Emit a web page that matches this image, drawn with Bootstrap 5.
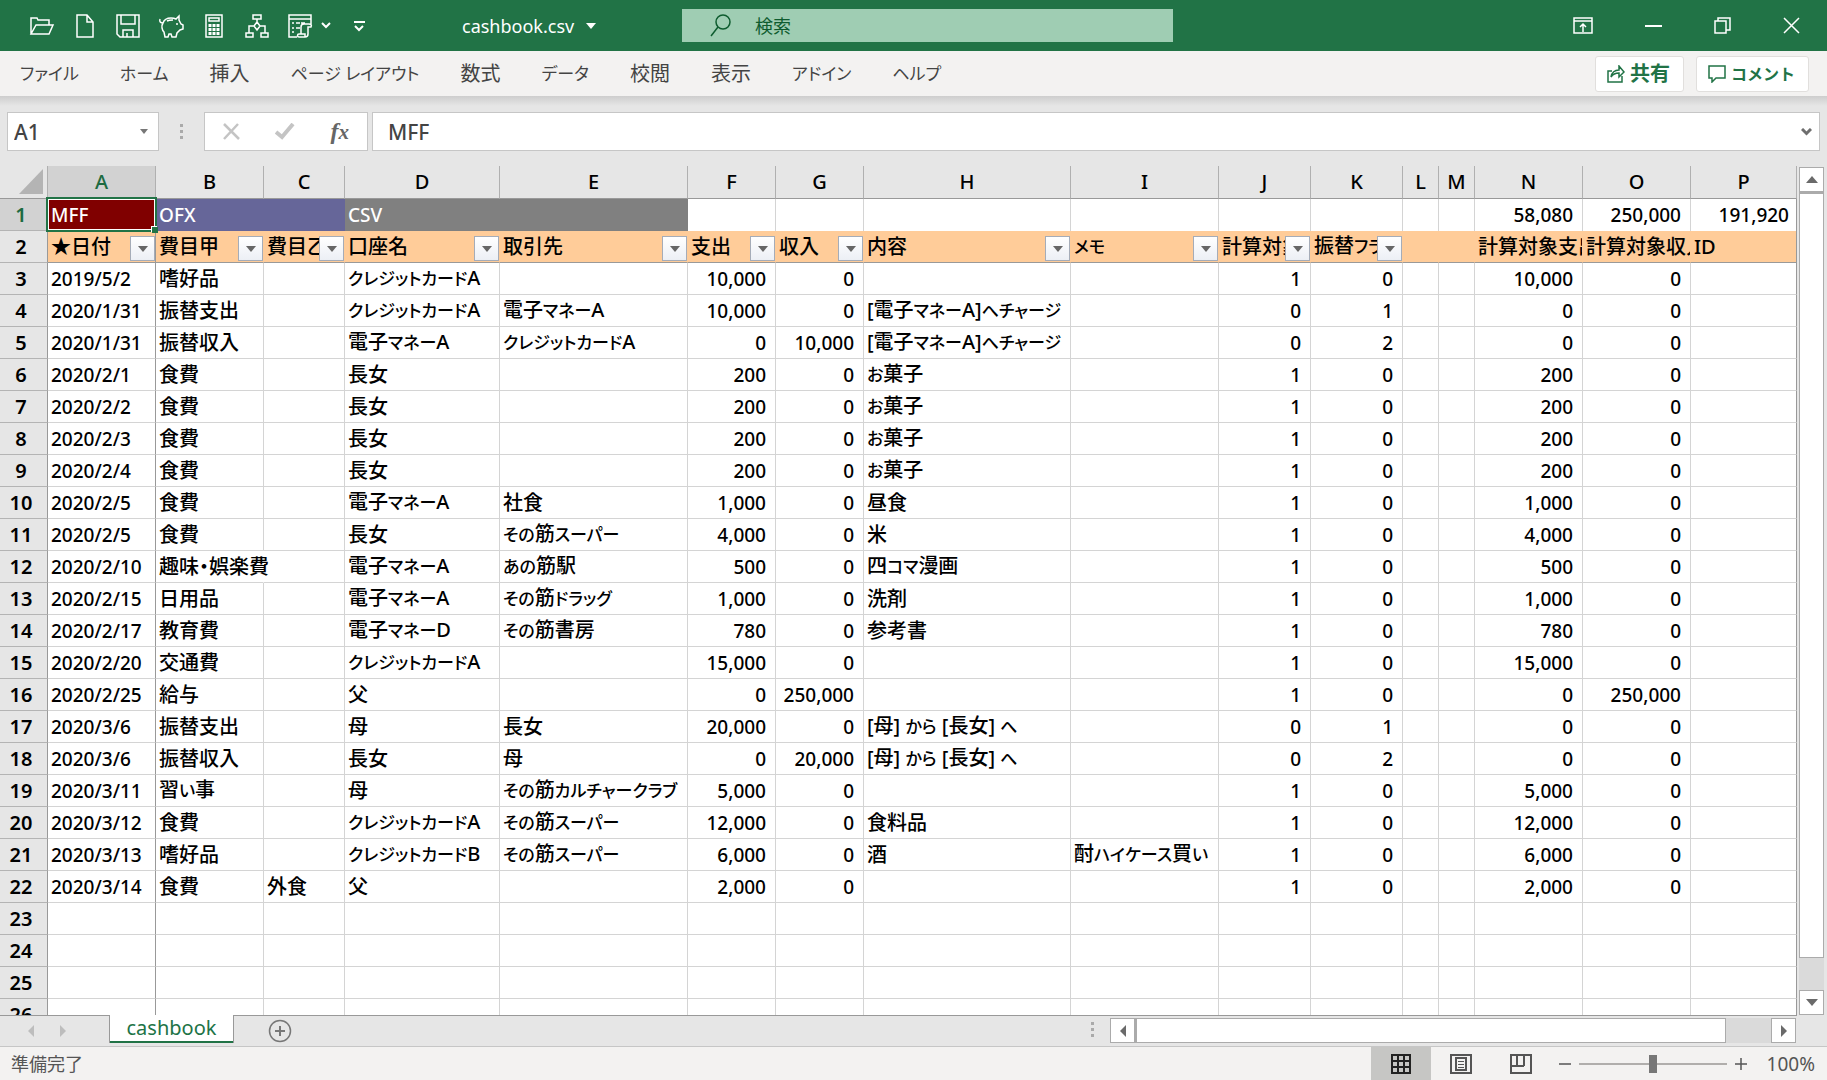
<!DOCTYPE html>
<html lang="ja">
<head>
<meta charset="utf-8">
<meta name="viewport" content="width=device-width, initial-scale=1">
<title>cashbook.csv</title>
<link href="https://cdn.jsdelivr.net/npm/bootstrap@5.3.0/dist/css/bootstrap.min.css" rel="stylesheet">
<style>
:root { --xl-green: #217346; --xl-line: #d4d4d4; --xl-dark: #999; --xl-chrome: #e6e6e6; --xl-ribbon: #f3f2f1; }
body { font-family: "Noto Sans", "Noto Sans CJK JP", sans-serif; font-feature-settings: "palt"; font-size: 20px; line-height: 30px; background: var(--xl-chrome); color: #444; }
svg { display: block; fill: none; flex: none; }
svg:not([stroke]) { stroke: currentColor; }
button { color: inherit; }
.ico { padding: 0; border: 0; background: none; }
.kana { font-size: 17px; }

.titlebar { background: var(--xl-green); height: 51px; color: #fff; }
.quick { gap: 18px; padding-left: 29px; width: 462px; }
.doc-title { font-size: 18px; color: #fff; gap: 12px; width: 220px; }
.finder { background: #9fcdb3; width: 491px; height: 33px; color: #0e5c2f; padding-left: 28px; gap: 24px; }
.finder input { font-size: 18px; line-height: 24px; color: #0e5c2f; }
.finder input::placeholder { color: #0e5c2f; opacity: 1; }
.winbtns { gap: 52px; padding-right: 27px; }

.ribbon { background: var(--xl-ribbon); height: 45px; padding: 0 18px 0 20px; }
.ribbon .nav { gap: 41px; }
.ribbon .nav-link { padding: 0; color: #444; line-height: 44px; white-space: nowrap; }
.actions { gap: 12px; }
.pill { background: #fff; border: 1px solid #e1dfdd; border-radius: 3px; height: 36px; color: var(--xl-green); font-weight: 700; padding: 0 13px 0 11px; gap: 5px; line-height: 32px; }
.pill.kana { font-size: 16px; }

.fbar { padding: 16px 7px 15px; background: linear-gradient(#cdcdcd, var(--xl-chrome) 10px); }
.fbox { background: #fff; border: 1px solid #c6c6c6; height: 39px; }
.fbox input { font-size: 21px; font-weight: 500; line-height: 30px; color: #444; }
.namebox { width: 152px; padding: 0 10px 0 6px; }
.gripper { width: 45px; }
.fxbox { width: 164px; padding: 0 18px; margin-right: 4px; }
.fx { font: italic 700 24px/30px "Liberation Serif", serif; color: #666; }
.formula { padding: 0 7px 0 15px; }

.pane { overflow: hidden; }
.sheet { table-layout: fixed; border-collapse: separate; border-spacing: 0; width: 100%; color: #000; font-weight: 500; background: #fff; }
.sheet th, .sheet td { height: 32px; padding: 0 0 0 3px; line-height: 30px; border: solid var(--xl-line); border-width: 0 1px 1px 0; white-space: nowrap; overflow: hidden; }
.sheet thead th { height: 33px; background: var(--xl-chrome); text-align: center; font-weight: 500; padding: 0; border-color: var(--xl-dark); border-right-color: #b0b0b0; }
.sheet tbody th { background: var(--xl-chrome); text-align: center; font-weight: 600; padding: 0 5px 0 0; border-color: var(--xl-dark); border-bottom-color: #b4b4b4; }
.sheet .on { background: #d2d2d2; color: #1e6b41; }
.sheet td.num { text-align: right; padding: 0 9px 0 0; font-size: 19px; }
.sheet td.date { font-size: 19px; }
.sheet td.spill { overflow: visible; border-right-color: transparent; }
.sheet td.frz { border-right-color: var(--xl-dark); }
.sheet td:last-child { border-right-color: var(--xl-dark); padding-right: 7px; }
.sheet tr.band td { border-bottom-width: 0; }
.sheet tr.band td.mff, .sheet tr.band td.ofx, .sheet tr.band td.csv { color: #fff; font-size: 19px; border-right-width: 0; }
.mff { background: #800000; position: relative; overflow: visible !important; }
.ofx { background: #666699; }
.csv { background: #808080; }
.sheet tr.names td { background: #ffcc99; border-right-color: #ffcc99; border-bottom-color: var(--xl-dark); position: relative; }
.sheet tr.names td.frz, .sheet tr.names td:last-child { border-right-color: var(--xl-dark); }
.filter { position: absolute; right: 0; bottom: 1px; width: 25px; height: 25px; padding: 0; border: 1px solid #a5acb8; background: linear-gradient(#fff, #eceff5); color: #666; display: flex; align-items: center; justify-content: center; }
.cursor { position: absolute; inset: -2px -1px -1px -2px; border: 2px solid var(--xl-green); box-shadow: inset 0 0 0 1px #fff; pointer-events: none; z-index: 2; }
.cursor::after { content: ""; position: absolute; right: -3px; bottom: -3px; width: 6px; height: 6px; background: var(--xl-green); box-shadow: -1px -1px 0 #fff; }

.vscroll { width: 30px; padding: 1px 3px 0 2px; }
.sbtn { width: 25px; height: 25px; background: #fff; border: 1px solid #ababab; padding: 0; color: #6a6a6a; display: flex; align-items: center; justify-content: center; flex: none; }
.track { background: #dadada; }
.thumb { background: #fff; border: 1px solid #ababab; }
.vscroll .thumb { height: 96%; border-top-width: 2px; }
.hscroll { width: 686px; height: 25px; margin: 3px 31px 0 0; }
.hscroll .thumb { width: 93%; border-left-width: 2px; }

.sheetbar { height: 32px; border-bottom: 1px solid #c6c6c6; background: linear-gradient(var(--xl-dark), var(--xl-dark)) 0 0 / calc(100% - 30px) 1px no-repeat; }
.arrows { width: 109px; padding-left: 28px; gap: 26px; color: #bdbdbd; }
.sheet-tab { width: 125px; height: 28px; background: #fff; border: solid var(--xl-dark); border-width: 0 1px; box-shadow: inset 0 -2px 0 var(--xl-green); color: var(--xl-green); line-height: 25px; text-align: center; text-decoration: none; }
.adder { margin-left: 34px; color: #777; }

.status { background: var(--xl-ribbon); height: 33px; color: #555; font-size: 18px; padding: 0 12px 0 11px; }
.percent { font-size: 19px; margin-left: 20px; }
.view { width: 60px; height: 33px; padding: 0; border: 0; background: none; display: flex; align-items: center; justify-content: center; }
.view.picked { background: #c6c6c4; color: #222; }
.zoomer { appearance: none; width: 148px; height: 18px; background: linear-gradient(#b0aeac, #b0aeac) 0 8px / 100% 2px no-repeat; }
.zoomer::-webkit-slider-thumb { appearance: none; width: 8px; height: 18px; background: #777; }
.zoomer::-moz-range-thumb { width: 8px; height: 18px; border: 0; border-radius: 0; background: #777; }
</style>
</head>
<body class="vh-100 overflow-hidden d-flex flex-column">

<header class="titlebar d-flex align-items-center flex-shrink-0">
  <div class="quick d-flex align-items-center flex-shrink-0">
    <button class="ico" aria-label="開く"><svg width="26" height="24" stroke-width="1.500"><path d="M2 20V4h6l1 2h11v5M2 20l5-9h17l-4 9z"/></svg></button>
    <button class="ico" aria-label="新規"><svg width="24" height="26" stroke-width="1.500"><path d="M4 2h10l6 7v15H4zM14 2v7h6"/></svg></button>
    <button class="ico" aria-label="上書き保存"><svg width="25" height="26" stroke-width="1.500"><path d="M2 2h22v22H5l-3-3zM6 2v9h14V2M8 24v-7h10v7M12 20v4"/></svg></button>
    <button class="ico" aria-label="家計"><svg width="26" height="24" stroke-width="1.500"><path d="M5 9C3 9 1 8 2 5M5 9c1-3 4-5 8-5 2 0 3 0 5 1l3-3v4l2 4 2 1v4l-3 1-3 3-1 4h-4l-1-3h-2l-1 3H7l-1-5c-2-2-3-6-1-9zM9 7c2-1 4-1 6-1"/><circle cx="19" cy="10" r="1" fill="currentColor" stroke="none"/></svg></button>
    <button class="ico" aria-label="電卓"><svg width="24" height="26" stroke-width="1.500"><path d="M4 2h16v22H4zM7 5h10v3H7z"/><path stroke-width="3" stroke-dasharray="3 1" d="M6.500 12.500h11M6.500 16.500h11M6.500 20.500h11"/></svg></button>
    <button class="ico" aria-label="構成図"><svg width="25" height="26" stroke-width="1.500"><path d="M9 2h8v4H9zM13 6v3M13 9l3 4-3 4-3-4zM10 13H5v7M16 13h5v7M2 20h7v4H2zM17 20h7v4h-7z"/></svg></button>
    <button class="ico d-flex align-items-center gap-2" aria-label="マクロ"><svg width="26" height="26" stroke-width="1.500"><path d="M10 24H2V2h22v9M2 6h22M5 10h2M9 10h4M14 10h4M5 15h2M9 15h4M5 19h2M14 21v-7c0-2 1-3 3-3h5c2 0 3 1 2 3h-3v7c0 2-1 3-3 3h-6c-2 0-2-3 0-3h6v3"/></svg><svg width="10" height="7" stroke-width="2"><path d="M1 1l4 4 4-4"/></svg></button>
    <button class="ico ms-1" aria-label="クイックアクセスのカスタマイズ"><svg width="13" height="12" stroke-width="2"><path d="M1 2h11M2 6l4 4 4-4"/></svg></button>
  </div>
  <button class="ico doc-title d-flex align-items-center flex-shrink-0">cashbook.csv <svg width="10" height="6" stroke="none"><path fill="currentColor" d="M0 0h10L5 6z"/></svg></button>
  <label class="finder d-flex align-items-center">
    <svg width="21" height="24" stroke-width="1.500"><ellipse cx="13" cy="8" rx="7" ry="7"/><path d="M8 13L1 22"/></svg>
    <input class="border-0 bg-transparent p-0 flex-grow-1" type="search" placeholder="検索" aria-label="検索">
  </label>
  <div class="winbtns d-flex align-items-center ms-auto">
    <button class="ico" aria-label="リボンの表示オプション"><svg width="20" height="17" stroke-width="1.500"><path d="M1 1h18v15H1zM1 4h18M10 15V7M7 10l3-3 3 3"/></svg></button>
    <button class="ico" aria-label="最小化"><svg width="17" height="17" stroke-width="2"><path d="M0 9h17"/></svg></button>
    <button class="ico" aria-label="元に戻す"><svg width="17" height="17" stroke-width="1.500"><path d="M1 4h11v12H1zM4 4V1h12v12h-4"/></svg></button>
    <button class="ico" aria-label="閉じる"><svg width="17" height="17" stroke-width="1.500"><path d="M1 1l15 15M16 1L1 16"/></svg></button>
  </div>
</header>

<div class="ribbon d-flex align-items-center flex-shrink-0">
  <nav class="nav flex-nowrap">
    <a class="nav-link kana" href="#">ファイル</a>
    <a class="nav-link kana" href="#">ホーム</a>
    <a class="nav-link" href="#">挿入</a>
    <a class="nav-link kana" href="#">ページ レイアウト</a>
    <a class="nav-link" href="#">数式</a>
    <a class="nav-link kana" href="#">データ</a>
    <a class="nav-link" href="#">校閲</a>
    <a class="nav-link" href="#">表示</a>
    <a class="nav-link kana" href="#">アドイン</a>
    <a class="nav-link kana" href="#">ヘルプ</a>
  </nav>
  <div class="actions d-flex ms-auto">
    <button class="pill d-flex align-items-center"><svg width="18" height="18" stroke-width="1.500"><path d="M5 6H1v11h14v-6M4 12c1-5 4-7 8-7V1l5 6-5 5V8c-4 0-6 1-8 4z"/></svg>共有</button>
    <button class="pill d-flex align-items-center kana"><svg width="18" height="18" stroke-width="1.500"><path d="M1 1h16v12H8l-4 4v-4H1z"/></svg>コメント</button>
  </div>
</div>

<div class="fbar d-flex flex-shrink-0">
  <div class="fbox namebox d-flex align-items-center">
    <input class="border-0 bg-transparent p-0 w-100" type="text" value="A1" aria-label="名前ボックス">
    <svg width="8" height="5" stroke="none"><path fill="#777" d="M0 0h8L4 5z"/></svg>
  </div>
  <div class="gripper d-flex align-items-center justify-content-center"><svg width="3" height="15" stroke="none"><path fill="#aaa" d="M0 0h3v3H0zM0 6h3v3H0zM0 12h3v3H0z"/></svg></div>
  <div class="fbox fxbox d-flex align-items-center justify-content-between">
    <button class="ico" aria-label="キャンセル"><svg width="17" height="17" stroke="#c4c4c4" stroke-width="2.500"><path d="M1 1l15 15M15 1L1 16"/></svg></button>
    <button class="ico" aria-label="入力"><svg width="20" height="17" stroke="#c4c4c4" stroke-width="4"><path d="M1 9l6 5L18 1"/></svg></button>
    <button class="ico fx" aria-label="関数の挿入"><span>f</span><small>x</small></button>
  </div>
  <div class="fbox formula d-flex align-items-center flex-grow-1">
    <input class="border-0 bg-transparent p-0 w-100" type="text" value="MFF" aria-label="数式バー">
    <svg width="11" height="8" stroke="#6e6e6e" stroke-width="3"><path d="M1 1l4.500 4.500L10 1"/></svg>
  </div>
</div>

<main class="d-flex flex-grow-1 overflow-hidden">
  <div class="pane flex-grow-1">
    <table class="sheet">
      <colgroup id="cols"></colgroup>
      <thead><tr id="letters"></tr></thead>
      <tbody id="rows"></tbody>
    </table>
  </div>
  <div class="vscroll d-flex flex-column flex-shrink-0">
    <button class="sbtn" aria-label="上へ"><svg width="12" height="7" stroke="none"><path fill="currentColor" d="M0 7h12L6 0z"/></svg></button>
    <div class="track flex-grow-1"><div class="thumb"></div></div>
    <button class="sbtn" aria-label="下へ"><svg width="12" height="7" stroke="none"><path fill="currentColor" d="M0 0h12L6 7z"/></svg></button>
  </div>
</main>

<div class="sheetbar d-flex align-items-start flex-shrink-0">
  <div class="arrows d-flex align-self-center">
    <button class="ico" aria-label="前のシート"><svg width="6" height="12" stroke="none"><path fill="currentColor" d="M6 0v12L0 6z"/></svg></button>
    <button class="ico" aria-label="次のシート"><svg width="6" height="12" stroke="none"><path fill="currentColor" d="M0 0v12l6-6z"/></svg></button>
  </div>
  <a class="sheet-tab" href="#">cashbook</a>
  <button class="ico adder align-self-center" aria-label="新しいシート"><svg width="24" height="24" stroke-width="1.500"><circle cx="12" cy="12" r="10.500"/><path stroke-width="2" d="M7 12h10M12 7v10"/></svg></button>
  <div class="ms-auto d-flex align-items-center">
    <svg class="me-3" width="3" height="15" stroke="none"><path fill="#aaa" d="M0 0h3v3H0zM0 6h3v3H0zM0 12h3v3H0z"/></svg>
    <div class="hscroll d-flex">
      <button class="sbtn" aria-label="左へ"><svg width="6" height="12" stroke="none"><path fill="currentColor" d="M6 0v12L0 6z"/></svg></button>
      <div class="track flex-grow-1 d-flex"><div class="thumb"></div></div>
      <button class="sbtn" aria-label="右へ"><svg width="6" height="12" stroke="none"><path fill="currentColor" d="M0 0v12l6-6z"/></svg></button>
    </div>
  </div>
</div>

<footer class="status d-flex align-items-center flex-shrink-0">
  <span>準備完了</span>
  <div class="d-flex align-items-center ms-auto">
    <button class="view picked" aria-label="標準"><svg width="20" height="20" stroke-width="2"><path d="M1 1h18v18H1zM7 1v18M13 1v18M1 7h18M1 13h18"/></svg></button>
    <button class="view" aria-label="ページ レイアウト表示"><svg width="22" height="20" stroke-width="2"><path d="M1 1h20v18H1zM6 4h10v12H6z"/><path stroke-width="1" d="M8 7.500h6M8 10.500h6M8 13.500h6"/></svg></button>
    <button class="view" aria-label="改ページ プレビュー"><svg width="22" height="20" stroke-width="2"><path d="M1 1h20v18H1zM1 12h13M7 1v11M14 1v11"/></svg></button>
    <button class="ico ms-2 me-2" aria-label="縮小"><svg width="12" height="12" stroke-width="1.500"><path d="M0 6h12"/></svg></button>
    <input class="zoomer" type="range" min="10" max="190" value="100" aria-label="ズーム">
    <button class="ico ms-2" aria-label="拡大"><svg width="12" height="12" stroke-width="1.500"><path d="M0 6h12M6 0v12"/></svg></button>
    <span class="percent">100%</span>
  </div>
</footer>

<script src="https://cdn.jsdelivr.net/npm/bootstrap@5.3.0/dist/js/bootstrap.bundle.min.js"></script>
<script>
// Column widths in pixels; the last column takes what is left.
const widths = [48, 108, 108, 81, 155, 188, 88, 88, 207, 148, 92, 92, 36, 36, 108, 108, 0];
const letters = 'ABCDEFGHIJKLMNOP'.split('');
const names = ['★日付', '費目甲', '費目乙', '口座名', '取引先', '支出', '収入', '内容', 'メモ', '計算対象', '振替フラグ', '', '', '計算対象支出', '計算対象収入', 'ID'];
// date|category|sub-category|account|partner|out|in|content|memo|counted|transfer
const book = `2019/5/2|嗜好品||クレジットカードA||10,000|0|||1|0
2020/1/31|振替支出||クレジットカードA|電子マネーA|10,000|0|[電子マネーA]へチャージ||0|1
2020/1/31|振替収入||電子マネーA|クレジットカードA|0|10,000|[電子マネーA]へチャージ||0|2
2020/2/1|食費||長女||200|0|お菓子||1|0
2020/2/2|食費||長女||200|0|お菓子||1|0
2020/2/3|食費||長女||200|0|お菓子||1|0
2020/2/4|食費||長女||200|0|お菓子||1|0
2020/2/5|食費||電子マネーA|社食|1,000|0|昼食||1|0
2020/2/5|食費||長女|その筋スーパー|4,000|0|米||1|0
2020/2/10|趣味・娯楽費||電子マネーA|あの筋駅|500|0|四コマ漫画||1|0
2020/2/15|日用品||電子マネーA|その筋ドラッグ|1,000|0|洗剤||1|0
2020/2/17|教育費||電子マネーD|その筋書房|780|0|参考書||1|0
2020/2/20|交通費||クレジットカードA||15,000|0|||1|0
2020/2/25|給与||父||0|250,000|||1|0
2020/3/6|振替支出||母|長女|20,000|0|[母] から [長女] へ||0|1
2020/3/6|振替収入||長女|母|0|20,000|[母] から [長女] へ||0|2
2020/3/11|習い事||母|その筋カルチャークラブ|5,000|0|||1|0
2020/3/12|食費||クレジットカードA|その筋スーパー|12,000|0|食料品||1|0
2020/3/13|嗜好品||クレジットカードB|その筋スーパー|6,000|0|酒|酎ハイケース買い|1|0
2020/3/14|食費|外食|父||2,000|0|||1|0`.split('\n').map(line => line.split('|'));

const cell = (text, cls = '') => `<td class="${cls}">${text}</td>`;
const wrapKana = text => text.replace(/[ぁ-んァ-ヺー]+/g, run => `<span class="kana">${run}</span>`);
const arrow = '<svg width="10" height="6" stroke="none"><path fill="currentColor" d="M0 0h10L5 6z"/></svg>';

document.getElementById('cols').innerHTML = widths.map(w => w ? `<col style="width:${w}px">` : '<col>').join('');
document.getElementById('letters').innerHTML =
  '<th><svg class="ms-auto me-1" width="24" height="26" stroke="none"><path fill="#b4b4b4" d="M24 0v25H0z"/></svg></th>' +
  letters.map(l => `<th scope="col" class="${l === 'A' ? 'on' : ''}">${l}</th>`).join('');

let html = '<tr class="band"><th scope="row" class="on">1</th>' + cell('MFF<div class="cursor"></div>', 'mff') +
  cell('OFX', 'ofx') + cell('', 'ofx') + cell('CSV', 'csv') + cell('', 'csv') + cell('').repeat(8) +
  cell('58,080', 'num') + cell('250,000', 'num') + cell('191,920', 'num') + '</tr>';
html += '<tr class="names"><th scope="row">2</th>' + names.map((n, i) =>
  cell(wrapKana(n) + (i < 11 ? `<button class="filter" aria-label="${n} フィルター">${arrow}</button>` : ''), i === 0 ? 'frz' : '')).join('') + '</tr>';
for (let r = 3; r <= 26; r++) {
  const d = book[r - 3];
  html += `<tr><th scope="row">${r}</th>`;
  for (let c = 0; c < 16; c++) {
    let text = '', cls = '';
    if (d) {
      text = c < 11 ? d[c] : c === 13 ? (d[9] === '1' ? d[5] : '0') : c === 14 ? (d[9] === '1' ? d[6] : '0') : '';
      if ([5, 6, 9, 10, 13, 14].includes(c)) cls = 'num';
      else text = wrapKana(text);
    }
    if (c === 0) cls = 'frz date';
    if (c === 1 && d && d[1].length > 5) cls = 'spill';
    html += cell(text, cls);
  }
  html += '</tr>';
}
document.getElementById('rows').innerHTML = html;
</script>
</body>
</html>
